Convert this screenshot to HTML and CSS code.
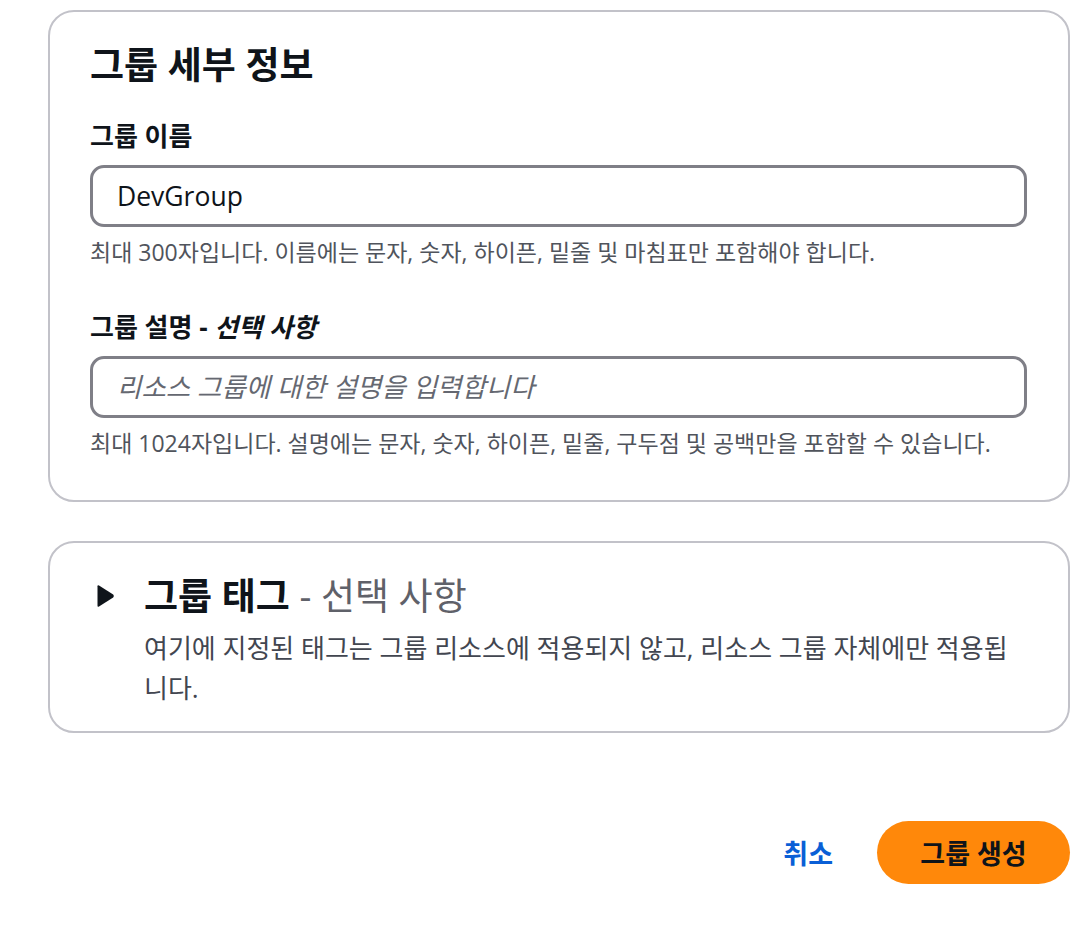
FILE: index.html
```html
<!DOCTYPE html>
<html lang="ko">
<head>
<meta charset="utf-8">
<title>그룹 생성</title>
<link rel="stylesheet" href="styles.css">
</head>
<body>
<main class="page">
  <section class="card details">
    <h2 class="card-title">그룹 세부 정보</h2>
    <div class="field">
      <label class="field-label" for="gname">그룹 이름</label>
      <input id="gname" class="text-input" type="text" value="DevGroup">
      <p class="field-desc">최대 300자입니다. 이름에는 문자, 숫자, 하이픈, 밑줄 및 마침표만 포함해야 합니다.</p>
    </div>
    <div class="field field-second">
      <label class="field-label" for="gdesc">그룹 설명 - <i>선택 사항</i></label>
      <input id="gdesc" class="text-input" type="text" placeholder="리소스 그룹에 대한 설명을 입력합니다">
      <p class="field-desc">최대 1024자입니다. 설명에는 문자, 숫자, 하이픈, 밑줄, 구두점 및 공백만을 포함할 수 있습니다.</p>
    </div>
  </section>

  <section class="card tags">
    <div class="expander">
      <svg class="caret" width="19" height="24" viewBox="0 0 19 24" aria-hidden="true">
        <path d="M1.5 2.2 Q1.5 0.6 3 1.5 L17.2 10.6 Q18.6 12 17.2 13.4 L3 22.5 Q1.5 23.4 1.5 21.8 Z" fill="#0f141a"/>
      </svg>
      <div class="expander-body">
        <h2 class="expander-title"><span class="strong">그룹 태그</span> <span class="optional">- 선택 사항</span></h2>
        <p class="expander-desc">여기에 지정된 태그는 그룹 리소스에 적용되지 않고, 리소스 그룹 자체에만 적용됩니다.</p>
      </div>
    </div>
  </section>

  <div class="actions">
    <button class="btn-link" type="button">취소</button>
    <button class="btn-primary" type="button">그룹 생성</button>
  </div>
</main>
</body>
</html>
```

FILE: styles.css
```css
html, body {
  margin: 0;
  padding: 0;
  background: #ffffff;
}

body {
  font-family: "Open Sans", "Noto Sans CJK KR", "Noto Sans", sans-serif;
  color: #0f141a;
}

.page {
  padding: 10px 20px 40px 48px;
  display: flex;
  flex-direction: column;
}

.card {
  border: 2px solid #c2c2c9;
  border-radius: 26px;
  background: #ffffff;
}

.details {
  padding: 31px 41px 42px 40px;
}

.card-title {
  margin: 0;
  font-size: 37px;
  line-height: 44px;
  font-weight: 700;
}

.field {
  display: flex;
  flex-direction: column;
  margin-top: 33px;
}

.field-second {
  margin-top: 44px;
}

.field-label {
  font-size: 26px;
  line-height: 32px;
  font-weight: 700;
  color: #0f141a;
}

.field-label i {
  font-style: italic;
}

.text-input {
  margin-top: 13px;
  box-sizing: border-box;
  height: 62px;
  width: 100%;
  border: 3px solid #7f7f87;
  border-radius: 14px;
  padding: 0 24px;
  font-family: "Open Sans", "Noto Sans CJK KR", sans-serif;
  font-size: 26.5px;
  color: #0f141a;
  background: #ffffff;
  outline: none;
}

.text-input::placeholder {
  color: #656871;
  font-style: italic;
}

.field-desc {
  margin: 10px 0 0;
  font-size: 23px;
  line-height: 30px;
  color: #50545c;
}

.tags {
  margin-top: 39px;
  padding: 31px 40px 23px 46px;
}

.expander {
  display: flex;
  align-items: flex-start;
  gap: 29px;
}

.caret {
  flex: none;
  margin-top: 10px;
}

.expander-body {
  flex: 1;
}

.expander-title {
  margin: 0;
  font-size: 37px;
  line-height: 44px;
  font-weight: 400;
}

.expander-title .strong {
  font-weight: 700;
  color: #0f141a;
}

.expander-title .optional {
  color: #5f6169;
}

.expander-desc {
  margin: 10px 0 0;
  font-size: 26px;
  line-height: 40px;
  color: #424650;
}

.actions {
  margin-top: 88px;
  display: flex;
  justify-content: flex-end;
  align-items: center;
  gap: 24px;
}

.btn-link {
  background: none;
  border: none;
  padding: 0 20px;
  font-family: "Open Sans", "Noto Sans CJK KR", sans-serif;
  font-size: 27px;
  font-weight: 700;
  color: #0a5fd6;
  cursor: pointer;
}

.btn-primary {
  box-sizing: border-box;
  width: 193px;
  height: 63px;
  border: none;
  border-radius: 32px;
  background: #ff880a;
  font-family: "Open Sans", "Noto Sans CJK KR", sans-serif;
  font-size: 27px;
  font-weight: 700;
  color: #0f141a;
  cursor: pointer;
}
```
